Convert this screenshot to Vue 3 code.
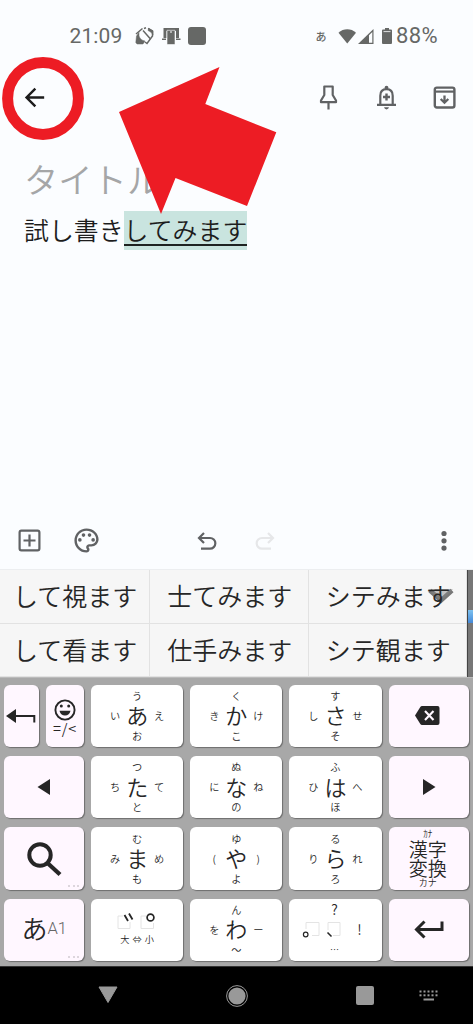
<script setup>
const candidates = ['して視ます', '士てみます', 'シテみます', 'して看ます', '仕手みます', 'シテ観ます']

const kana = (c, u, l, r, d) => ({ type: 'kana', c, u, l, r, d })
const keys = [
  { type: 'split' },
  kana('あ', 'う', 'い', 'え', 'お'),
  kana('か', 'く', 'き', 'け', 'こ'),
  kana('さ', 'す', 'し', 'せ', 'そ'),
  { type: 'delete', fn: true },
  { type: 'left', fn: true },
  kana('た', 'つ', 'ち', 'て', 'と'),
  kana('な', 'ぬ', 'に', 'ね', 'の'),
  kana('は', 'ふ', 'ひ', 'へ', 'ほ'),
  { type: 'right', fn: true },
  { type: 'search', fn: true },
  kana('ま', 'む', 'み', 'め', 'も'),
  kana('や', 'ゆ', '(', ')', 'よ'),
  kana('ら', 'る', 'り', 'れ', 'ろ'),
  { type: 'convert', fn: true },
  { type: 'mode', fn: true },
  { type: 'daku' },
  kana('わ', 'ん', 'を', 'ー', '〜'),
  { type: 'punct' },
  { type: 'enter', fn: true }
]
const dots = [0, 1, 2, 3, 4]
</script>

<template>
  <div class="phone">
    <header class="status">
      <span class="time">21:09</span>
      <svg class="s-rot" width="19" height="18" viewBox="0 0 19 18" fill="none" stroke="#666866" stroke-width="1.5">
        <path d="M1 7L7.500 1.500M8 3.500L15.500 12" />
        <path d="M9 1.500L11 .8M13 1.500L17.500 4V9L12 16.500L10 15" />
        <path d="M1.500 9L4 5.500V9C5 12 7 13.500 10 14L8 17H2L.8 15.500Z" fill="#666866" stroke-width=".5" />
        <path d="M14 1.500L18 4V8C17 6 16 5 13 3.500Z" fill="#666866" stroke-width=".5" />
      </svg>
      <svg class="s-cast" width="19" height="18" viewBox="0 0 19 18" fill="#666866">
        <path d="M1.500 1H17V11H14V4H4.500V11H1.500Z" />
        <path d="M0 11.500H4V13H0ZM14 11.500H18.500V13H14Z" />
        <path d="M5 3.300H13V17.500H5Z" stroke="#fbfdff" stroke-width=".6" /><path d="M8 4.500H10V5.500H8Z" fill="#fff" />
      </svg>
      <span class="s-square"></span>
      <span class="s-ime">あ</span>
      <svg class="s-wifi" width="19" height="15" viewBox="0 0 19 15" fill="#666866"><path d="M.5 3.800C5.500-.8 13-.8 18 3.800L9.250 14.500Z" /></svg>
      <svg class="s-signal" width="16" height="15" viewBox="0 0 16 15"><path d="M0 15L15.500 0V15Z" fill="#666866" /><path d="M11 6.300L14.300 3V13.700H11Z" fill="#fbfdff" /></svg>
      <svg class="s-batt" width="10" height="16" viewBox="0 0 10 16"><path d="M3 0H7V1.500H9Q10 1.500 10 2.500V15Q10 16 9 16H1Q0 16 0 15V2.500Q0 1.500 1 1.500H3Z" fill="#666866" /><path d="M1.500 3.600H8.500" stroke="#dfe1e2" stroke-width="1" /></svg>
      <span class="pct">88%</span>
    </header>

    <div class="topbar">
      <svg class="mi back" viewBox="0 0 24 24"><path d="M20 11H7.830l5.590-5.590L12 4l-8 8 8 8 1.410-1.410L7.830 13H20v-2z" /></svg>
      <svg class="mi" viewBox="0 0 29 29" fill="none"><path d="M10.300 3.500H18.700V12L22 17.500V19.200H7V17.500L10.300 12ZM14.500 19.200V26.500" fill="none" stroke="#606264" stroke-width="2.200" stroke-linejoin="round" /></svg>
      <svg class="mi" viewBox="0 0 29 29">
        <path d="M8.300 21V12.800C8.300 8.800 10.600 6.200 14.500 6.200S20.700 8.800 20.700 12.800V21M5 21.800H24" fill="none" stroke="#606264" stroke-width="2.200" />
        <path d="M14.500 10.500V17.500M11 14H18" fill="none" stroke="#606264" stroke-width="2.400" />
        <circle cx="14.500" cy="4.700" r="1.900" /><path d="M12 24.300H17Q16.500 26.400 14.500 26.400T12 24.300Z" />
      </svg>
      <svg class="mi" viewBox="0 0 29 29">
        <rect x="4.800" y="4.600" width="19.600" height="19.900" rx="2" fill="none" stroke="#606264" stroke-width="2.400" />
        <path d="M5 8.600H24" fill="none" stroke="#606264" stroke-width="2.200" />
        <path d="M14.500 12.500V19.500M10.700 16L14.500 19.700L18.300 16" fill="none" stroke="#606264" stroke-width="2.300" />
      </svg>
    </div>

    <main class="note">
      <div class="title">タイトル</div>
      <div class="body">試し書き<span class="composing">してみます</span></div>
    </main>

    <div class="tools">
      <svg class="mi" viewBox="0 0 29 29"><rect x="4.600" y="4.600" width="19.800" height="19.800" rx="1.800" fill="none" stroke="#606264" stroke-width="2.200" /><path d="M14.500 8.500V20.500M8.500 14.500H20.500" stroke="#606264" stroke-width="2.200" /></svg>
      <svg class="mi palette" viewBox="0 0 24 24">
        <path d="M12 22C6.490 22 2 17.510 2 12S6.490 2 12 2s10 4.040 10 9c0 3.310-2.690 6-6 6h-1.770c-.28 0-.5.220-.5.500 0 .120.050.230.130.330.410.470.640 1.060.640 1.670 0 1.380-1.120 2.500-2.500 2.500zm0-18c-4.410 0-8 3.590-8 8s3.590 8 8 8c.28 0 .5-.220.500-.5 0-.160-.080-.280-.140-.350-.410-.460-.630-1.050-.630-1.650 0-1.380 1.120-2.500 2.500-2.500H16c2.210 0 4-1.790 4-4 0-3.860-3.590-7-8-7z" />
        <circle cx="6.500" cy="11.500" r="1.500" /><circle cx="9.500" cy="7.500" r="1.500" /><circle cx="14.500" cy="7.500" r="1.500" /><circle cx="17.500" cy="11.500" r="1.500" />
      </svg>
      <svg class="undo" width="20" height="18" viewBox="0 0 20 18"><path d="M7 1L2 6L7 11M2 6H13A5.300 5.300 0 0 1 13 16.700H4" fill="none" stroke="#606264" stroke-width="2.200" /></svg>
      <svg class="redo" width="20" height="18" viewBox="0 0 20 18"><path d="M13 1L18 6L13 11M18 6H7A5.300 5.300 0 0 0 7 16.700H16" fill="none" stroke="#e6e7e9" stroke-width="2.200" /></svg>
      <svg class="more" width="6" height="22" viewBox="0 0 6 22" fill="#606264"><circle cx="3" cy="3.500" r="2.600" /><circle cx="3" cy="10.800" r="2.600" /><circle cx="3" cy="18.100" r="2.600" /></svg>
    </div>

    <section class="suggest">
      <div class="cands">
        <div v-for="c in candidates" :key="c" class="cand">{{ c }}</div>
        <svg class="chev" width="28" height="18" viewBox="0 0 28 18"><path d="M3 3.500L14 13.500L25 3.500" fill="none" stroke="#777" stroke-width="4.500" /><path d="M1 2H26L14 14Z" fill="#8887" /></svg>
      </div>
      <div class="strip"><span></span></div>
    </section>

    <section class="keyboard">
      <template v-for="(k, i) in keys" :key="i">
        <div v-if="k.type === 'split'" class="split">
          <div class="key fn"><svg width="30" height="16" viewBox="0 0 30 16"><path d="M0 8L10 1V15Z" fill="#262626" /><path d="M9 8H28.300V14.500" fill="none" stroke="#262626" stroke-width="2" /></svg></div>
          <div class="key fn emoji">
            <svg width="22" height="22" viewBox="0 0 22 22"><circle cx="11" cy="11" r="9.600" fill="none" stroke="#262626" stroke-width="1.900" /><circle cx="7.300" cy="7" r="1.500" fill="#262626" /><circle cx="14.700" cy="7" r="1.500" fill="#262626" /><path d="M5.500 11.800H16.500Q15.500 16.500 11 16.500T5.500 11.800Z" fill="#262626" /></svg>
            <span>=/&lt;</span>
          </div>
        </div>
        <div v-else class="key" :class="{ fn: k.fn }">
          <div v-if="k.type === 'kana'" class="kana">
            <i class="u">{{ k.u }}</i><i class="l">{{ k.l }}</i><b>{{ k.c }}</b><i class="r">{{ k.r }}</i><i class="d">{{ k.d }}</i>
          </div>
          <svg v-else-if="k.type === 'delete'" class="del" width="25" height="19" viewBox="0 0 25 19"><path d="M7 0H22.500Q24.500 0 24.500 2V17Q24.500 19 22.500 19H7Q6 19 5.300 18L0 9.500L5.300 1Q6 0 7 0Z" fill="#262626" /><path d="M10 5L18.500 14M18.500 5L10 14" stroke="#fff7ff" stroke-width="2.100" /></svg>
          <svg v-else-if="k.type === 'left'" width="14" height="16" viewBox="0 0 14 16"><path d="M.5 8L13 0V16Z" fill="#262626" /></svg>
          <svg v-else-if="k.type === 'right'" width="14" height="16" viewBox="0 0 14 16"><path d="M13.500 8L1 0V16Z" fill="#262626" /></svg>
          <svg v-else-if="k.type === 'search'" width="36" height="36" viewBox="0 0 36 36" fill="none" stroke="#262626"><circle cx="14" cy="14" r="10.700" stroke-width="4" /><path d="M22 22.500L34 33.500" stroke-width="4.200" /></svg>
          <div v-else-if="k.type === 'convert'" class="convert"><small>ｶﾅ</small><span>漢字</span><span>変換</span><small>カナ</small></div>
          <div v-else-if="k.type === 'mode'" class="mode"><span>あ</span><em>A1</em></div>
          <div v-else-if="k.type === 'daku'" class="daku">
            <svg width="40" height="18" viewBox="0 0 40 18" fill="none"><path d="M6 4H1V16.500H13V10M29 4H24V16.500H36.500V11" stroke="#e4e4e4" /><path d="M7.500 3L11 9M12 1.500L15.500 7.500" stroke="#262626" stroke-width="1.800" /><circle cx="33.500" cy="5.500" r="3.400" stroke="#262626" stroke-width="1.700" /></svg>
            <span>大 ⇔ 小</span>
          </div>
          <div v-else-if="k.type === 'punct'" class="punct">
            <span class="q">?</span>
            <svg width="40" height="17" viewBox="0 0 40 17" fill="none"><path d="M4 8V1.500H17V14.500H10M26 9V1.500H38V14.500H31" stroke="#e4e4e4" /><circle cx="3.700" cy="13.500" r="2.300" stroke="#262626" stroke-width="1.200" /><path d="M25.500 11.500L29.500 15.500" stroke="#262626" stroke-width="1.600" /></svg>
            <span class="ex">!</span>
            <span class="el">…</span>
          </div>
          <svg v-else width="30" height="19" viewBox="0 0 30 19" fill="none" stroke="#262626" stroke-width="3"><path d="M10.500 1.500L2.500 9.500L10.500 17.500M2.500 9.500H28V1.500" /></svg>
          <span v-if="k.type === 'search' || k.type === 'mode'" class="hint"><s></s><s></s><s></s></span>
        </div>
      </template>
    </section>

    <nav class="nav">
      <svg class="n-back" width="20" height="18" viewBox="0 0 20 18"><path d="M1 1H19L10 16.500Z" fill="#999" stroke="#999" stroke-linejoin="round" /></svg>
      <svg class="n-home" width="22" height="22" viewBox="0 0 22 22"><circle cx="11" cy="11" r="8.600" fill="#999" /><circle cx="11" cy="11" r="10.400" fill="none" stroke="#999" /></svg>
      <span class="n-recent"></span>
      <svg class="n-kb" width="20" height="12" viewBox="0 0 20 12" fill="#999">
        <g v-for="d in dots" :key="d"><rect :x="0.500 + d * 4" y="0.500" width="2" height="2" /><rect :x="0.500 + d * 4" y="4.300" width="2" height="2" /></g>
        <rect x="4.500" y="8.500" width="10.500" height="2" />
      </svg>
    </nav>

    <svg class="marks" width="473" height="230" viewBox="0 0 473 230">
      <ellipse cx="43" cy="98.400" rx="35.400" ry="36" fill="none" stroke="#ed1c24" stroke-width="11" />
      <path d="M119 112L219.500 67L205.300 104L276.300 132.300L247 206L175.500 178L161 214Z" fill="#ed1c24" />
    </svg>
  </div>
</template>

<style scoped>
.phone { position: relative; width: 473px; height: 1024px; overflow: hidden; display: flex; flex-direction: column; background: #fbfdff; color: #262626; font-family: "Noto Sans CJK JP", sans-serif; font-weight: 350; }
.phone * { box-sizing: border-box; }
svg { display: block; flex: none; }
.status { height: 72px; display: flex; align-items: center; color: #666866; flex: none; font: 400 21px/24px Roboto, sans-serif; }
.time { margin-left: 69.500px; width: 53px; letter-spacing: .1px; }
.s-rot { margin-left: 12px; }
.s-cast { margin-left: 8px; }
.s-square { margin-left: 7.500px; width: 18px; height: 18px; border-radius: 3px; background: #666866; }
.s-ime { margin-left: 109.500px; width: 12px; font: 500 11px/16px "Noto Sans CJK JP", sans-serif; margin-top: -1px; }
.s-wifi { margin-left: 10.500px; }
.s-signal { margin-left: 1px; }
.s-batt { margin-left: 8px; }
.pct { margin-left: 4px; font-size: 22px; letter-spacing: .4px; }
.topbar { height: 51px; margin-bottom: 1px; flex: none; display: flex; align-items: center; gap: 29px; padding: 0 14.500px 0 19.500px; }
.mi { width: 29px; height: 29px; fill: #606264; }
.back { margin-right: auto; fill: #1c1c1c; }
.note { flex: 1; padding: 29px 24.500px 0 24px; }
.title { font-size: 34.300px; line-height: 50px; color: #a5a6a7; }
.body { margin-top: 8px; font-size: 24.900px; line-height: 36.500px; white-space: nowrap; display: flex; color: #1d1d1d; }
.composing { height: 39px; background: linear-gradient(#1e2221, #1e2221) 0 33px / 100% 2px no-repeat #c9e4df; }
.tools { height: 57px; flex: none; display: flex; align-items: center; padding-left: 14.500px; }
.palette { margin-left: 28.500px; }
.undo { margin-left: 96px; }
.redo { margin-left: 38px; }
.more { margin-left: 166px; }
.suggest { height: 108px; flex: none; display: flex; border-top: 1px solid #eceef0; }
.cands { position: relative; width: 467px; display: grid; grid-template-columns: 150px 159px 158px; grid-template-rows: 54px 53px; background: #f6f6f6; }
.cand { display: flex; align-items: center; justify-content: center; font-size: 25px; padding: 0 0 3px 1.500px; line-height: 36px; border-right: 1px solid #e2e2e2; border-bottom: 1.500px solid #e2e2e2; z-index: 1; }
.chev { position: absolute; left: 427px; top: 17px; }
.strip { width: 6px; background: #777; border-left: 1.500px solid #444; padding-top: 40px; }
.strip span { display: block; height: 13px; background: linear-gradient(#7dc1ef, #4589d8); }
.keyboard { height: 289px; flex: none; background: #a8a8a8; padding: 6.500px 3.500px 0; display: grid; grid-template-columns: 80.500px 92.500px 92px 92.500px 80.500px; grid-auto-rows: 62.500px; column-gap: 6.900px; row-gap: 8.900px; border-top: 1px solid #bbb; }
.key { position: relative; border-radius: 6px; background: #fff; box-shadow: 1px 1px 1px #6d6d6d; display: flex; align-items: center; justify-content: center; min-width: 0; }
.fn { background: #fff7ff; }
.del { margin-right: 2.500px; }
.split { display: flex; justify-content: space-between; }
.split .key { width: 35.500px; }
.split .emoji { width: 38px; flex-direction: column; padding-top: 4px; }
.emoji span { font: 350 14.500px/13px "Noto Sans CJK JP", sans-serif; letter-spacing: .8px; height: 16px; }
.kana { display: grid; grid-template-columns: 22px 22px 22px; grid-template-rows: 18px 22px 18px; place-items: center; transform: translateY(-.5px); grid-template-areas: ". u ." "l c r" ". d ."; }
.kana b { grid-area: c; font-weight: 350; font-size: 22px; line-height: 22px; margin-top: -3px; }
.kana i { font-style: normal; font-size: 10.200px; line-height: 12px; }
.u { grid-area: u; } .l { grid-area: l; } .r { grid-area: r; } .d { grid-area: d; }
.convert { display: flex; flex-direction: column; align-items: center; margin: -1px 2px 0 0; }
.convert span { font-size: 19px; line-height: 19.300px; }
.convert small { font-size: 9px; line-height: 11px; }
.mode { display: flex; align-items: center; font-size: 26px; line-height: 28px; padding: 0 0 3px 1px; }
.mode em { font: 300 16.500px/20px Roboto, sans-serif; color: #666; padding-top: 2px; }
.daku { display: flex; flex-direction: column; align-items: center; gap: 2px; margin-bottom: 1px; }
.daku span { font-size: 9.200px; line-height: 14px; white-space: nowrap; word-spacing: 1px; }
.punct { width: 66px; height: 62px; display: grid; grid-template-columns: 40px 26px; grid-template-rows: 21px 19px 22px; align-items: center; font-size: 14px; line-height: 18px; }
.punct .q, .punct .el { grid-column: 1 / 3; text-align: center; padding-right: 2px; }
.punct .ex { text-align: center; padding-left: 8px; }
.punct .el { font-size: 9px; }
.hint { position: absolute; right: 5px; bottom: 3px; display: flex; gap: 2.500px; }
.hint s { width: 2px; height: 2px; background: #ddd6dd; }
.nav { height: 58px; flex: none; background: #000; display: flex; align-items: center; border-top: 1px solid #333; }
.n-back { margin-left: 98px; margin-top: -2px; }
.n-home { margin-left: 107.500px; }
.n-recent { margin-left: 108px; width: 18.500px; height: 18.500px; border-radius: 2px; background: #999; }
.n-kb { margin-left: 45px; }
.marks { position: absolute; left: 0; top: 0; z-index: 3; }
</style>
